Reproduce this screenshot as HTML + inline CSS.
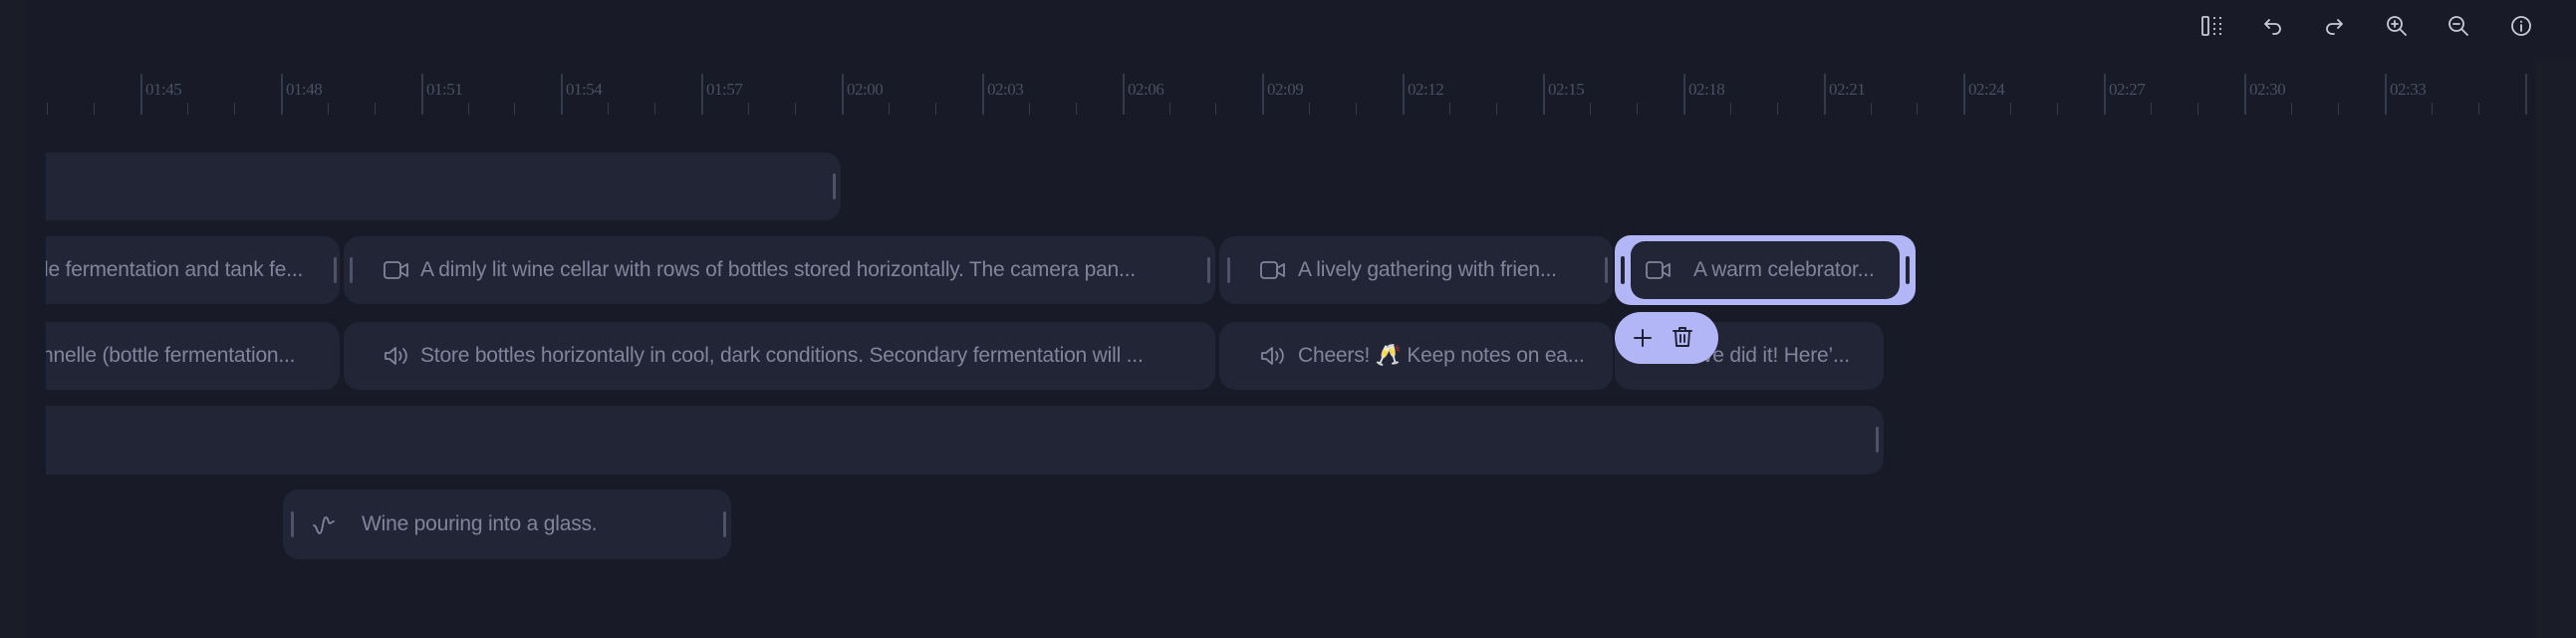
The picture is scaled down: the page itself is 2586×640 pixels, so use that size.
<!DOCTYPE html>
<html><head><meta charset="utf-8"><style>
*{margin:0;padding:0;box-sizing:border-box}
body{width:2586px;height:640px;background:#181a27;overflow:hidden;position:relative;font-family:"Liberation Sans","DejaVu Sans",sans-serif}
.lp{position:absolute;left:0;top:0;width:27px;height:640px;background:#1a1c28}
.rp{position:absolute;left:2545px;top:60px;width:41px;height:580px;background:#1a1c28}
.view{position:absolute;left:46px;top:0;width:2500px;height:640px;overflow:hidden}
.M{position:absolute;top:74px;width:2px;height:41px;background:#363a4a}
.m{position:absolute;top:103px;width:1px;height:12px;background:#363a4a}
.L{position:absolute;top:80px;font-family:"Liberation Serif",serif;font-size:17px;color:#4b4f60;letter-spacing:-0.5px}
.c{position:absolute;background:#222536;border-radius:16px;overflow:hidden}
.t{position:absolute;top:0;line-height:68px;font-size:21px;color:#80859a;white-space:nowrap;letter-spacing:-0.2px}
.h{position:absolute;top:21px;width:3px;height:26px;background:#4e5366;border-radius:2px}
.ic{position:absolute;top:22px}
.tb{position:absolute;top:13px}
</style></head><body>
<div class="lp"></div><div class="rp"></div>
<svg class="tb" style="left:2208px" width="26" height="26" viewBox="0 0 26 26" fill="none" stroke="#c8cbd6" stroke-width="1.8"><rect x="3" y="4" width="6" height="18" rx="1"/><path d="M15 4v2M15 10v2M15 15v2M15 20v2M21 4v2M21 10v2M21 15v2M21 20v2"/></svg>
<svg class="tb" style="left:2269px" width="26" height="26" viewBox="0 0 26 26" fill="none" stroke="#c8cbd6" stroke-width="1.8" stroke-linecap="round" stroke-linejoin="round"><path d="M9 7l-4 4 4 4M5 11h10a5 5 0 010 10h-2"/></svg>
<svg class="tb" style="left:2330px" width="26" height="26" viewBox="0 0 26 26" fill="none" stroke="#c8cbd6" stroke-width="1.8" stroke-linecap="round" stroke-linejoin="round"><path d="M17 7l4 4-4 4M21 11H11a5 5 0 000 10h2"/></svg>
<svg class="tb" style="left:2393px" width="26" height="26" viewBox="0 0 26 26" fill="none" stroke="#c8cbd6" stroke-width="1.8" stroke-linecap="round"><circle cx="11" cy="11" r="7"/><path d="M16 16l6 6M11 8v6M8 11h6"/></svg>
<svg class="tb" style="left:2455px" width="26" height="26" viewBox="0 0 26 26" fill="none" stroke="#c8cbd6" stroke-width="1.8" stroke-linecap="round"><circle cx="11" cy="11" r="7"/><path d="M16 16l6 6M8 11h6"/></svg>
<svg class="tb" style="left:2518px" width="26" height="26" viewBox="0 0 26 26" fill="none" stroke="#c8cbd6" stroke-width="1.8" stroke-linecap="round"><circle cx="13" cy="13" r="9"/><path d="M13 12v6M13 8.5v.5"/></svg>
<div class="view">
<div class="L" style="left:-38px">01:42</div>
<div class="m" style="left:1px"></div><div class="m" style="left:48px"></div>
<div class="M" style="left:95px"></div><div class="L" style="left:100px">01:45</div><div class="m" style="left:142px"></div><div class="m" style="left:189px"></div>
<div class="M" style="left:236px"></div><div class="L" style="left:241px">01:48</div><div class="m" style="left:283px"></div><div class="m" style="left:330px"></div>
<div class="M" style="left:377px"></div><div class="L" style="left:382px">01:51</div><div class="m" style="left:424px"></div><div class="m" style="left:470px"></div>
<div class="M" style="left:517px"></div><div class="L" style="left:522px">01:54</div><div class="m" style="left:564px"></div><div class="m" style="left:611px"></div>
<div class="M" style="left:658px"></div><div class="L" style="left:663px">01:57</div><div class="m" style="left:705px"></div><div class="m" style="left:752px"></div>
<div class="M" style="left:799px"></div><div class="L" style="left:804px">02:00</div><div class="m" style="left:846px"></div><div class="m" style="left:893px"></div>
<div class="M" style="left:940px"></div><div class="L" style="left:945px">02:03</div><div class="m" style="left:987px"></div><div class="m" style="left:1034px"></div>
<div class="M" style="left:1081px"></div><div class="L" style="left:1086px">02:06</div><div class="m" style="left:1128px"></div><div class="m" style="left:1174px"></div>
<div class="M" style="left:1221px"></div><div class="L" style="left:1226px">02:09</div><div class="m" style="left:1268px"></div><div class="m" style="left:1315px"></div>
<div class="M" style="left:1362px"></div><div class="L" style="left:1367px">02:12</div><div class="m" style="left:1409px"></div><div class="m" style="left:1456px"></div>
<div class="M" style="left:1503px"></div><div class="L" style="left:1508px">02:15</div><div class="m" style="left:1550px"></div><div class="m" style="left:1597px"></div>
<div class="M" style="left:1644px"></div><div class="L" style="left:1649px">02:18</div><div class="m" style="left:1691px"></div><div class="m" style="left:1738px"></div>
<div class="M" style="left:1785px"></div><div class="L" style="left:1790px">02:21</div><div class="m" style="left:1832px"></div><div class="m" style="left:1878px"></div>
<div class="M" style="left:1925px"></div><div class="L" style="left:1930px">02:24</div><div class="m" style="left:1972px"></div><div class="m" style="left:2019px"></div>
<div class="M" style="left:2066px"></div><div class="L" style="left:2071px">02:27</div><div class="m" style="left:2113px"></div><div class="m" style="left:2160px"></div>
<div class="M" style="left:2207px"></div><div class="L" style="left:2212px">02:30</div><div class="m" style="left:2254px"></div><div class="m" style="left:2301px"></div>
<div class="M" style="left:2348px"></div><div class="L" style="left:2353px">02:33</div><div class="m" style="left:2395px"></div><div class="m" style="left:2442px"></div>
<div class="M" style="left:2489px"></div>

<div class="c" style="left:-20px;top:153px;width:818px;height:68px"><div class="h" style="left:810px"></div></div>
<div class="c" style="left:-20px;top:237px;width:315px;height:68px"><div class="t" style="left:18px">le fermentation and tank fe...</div><div class="h" style="left:309px"></div></div>
<div class="c" style="left:299px;top:237px;width:875px;height:68px">
<div class="h" style="left:6px"></div>
<svg class="ic" style="left:39px" width="28" height="24" viewBox="0 0 28 24" fill="none" stroke="#80859a" stroke-width="1.8" stroke-linejoin="round"><rect x="2" y="4" width="16" height="16" rx="3"/><path d="M18 10l7-4v12l-7-4z"/></svg>
<div class="t" style="left:77px">A dimly lit wine cellar with rows of bottles stored horizontally. The camera pan...</div>
<div class="h" style="left:867px"></div></div>
<div class="c" style="left:1178px;top:237px;width:395px;height:68px">
<div class="h" style="left:8px"></div>
<svg class="ic" style="left:40px" width="28" height="24" viewBox="0 0 28 24" fill="none" stroke="#80859a" stroke-width="1.8" stroke-linejoin="round"><rect x="2" y="4" width="16" height="16" rx="3"/><path d="M18 10l7-4v12l-7-4z"/></svg>
<div class="t" style="left:79px">A lively gathering with frien...</div>
<div class="h" style="left:387px"></div></div>
<div class="c" style="left:-20px;top:323px;width:315px;height:68px"><div class="t" style="left:16px">nnelle (bottle fermentation...</div></div>
<div class="c" style="left:299px;top:323px;width:875px;height:68px">
<svg class="ic" style="left:39px" width="28" height="24" viewBox="0 0 28 24" fill="none" stroke="#80859a" stroke-width="1.8" stroke-linejoin="round" stroke-linecap="round"><path d="M3 9h4l6-5v16l-6-5H3z"/><path d="M17 8a6 6 0 010 8M21 5a10 10 0 010 14"/></svg>
<div class="t" style="left:77px">Store bottles horizontally in cool, dark conditions. Secondary fermentation will ...</div></div>
<div class="c" style="left:1178px;top:323px;width:395px;height:68px">
<svg class="ic" style="left:40px" width="28" height="24" viewBox="0 0 28 24" fill="none" stroke="#80859a" stroke-width="1.8" stroke-linejoin="round" stroke-linecap="round"><path d="M3 9h4l6-5v16l-6-5H3z"/><path d="M17 8a6 6 0 010 8M21 5a10 10 0 010 14"/></svg>
<div class="t" style="left:79px">Cheers! 🥂 Keep notes on ea...</div></div>
<div class="c" style="left:1575px;top:323px;width:270px;height:68px">
<div class="t" style="left:79px">We did it! Here’...</div></div>
<div class="c" style="left:-20px;top:407px;width:1865px;height:69px"><div class="h" style="left:1857px"></div></div>
<div class="c" style="left:238px;top:491px;width:450px;height:70px">
<div class="h" style="left:8px;top:22px"></div>
<svg class="ic" style="left:28px;top:22px" width="30" height="26" viewBox="0 0 30 26" fill="none" stroke="#80859a" stroke-width="1.8" stroke-linecap="round" stroke-linejoin="round"><path d="M3 14c3 0 3 8 6 8s3-16 6-16 2 6 4 6 2-2 4-2"/></svg>
<div class="t" style="left:79px;line-height:70px">Wine pouring into a glass.</div>
<div class="h" style="left:442px;top:22px"></div></div>
<div style="position:absolute;left:1575px;top:236px;width:302px;height:70px;background:#b2b6f7;border-radius:16px">
<div style="position:absolute;left:16px;top:6px;width:270px;height:58px;background:#222536;border-radius:14px"></div>
<div style="position:absolute;left:6px;top:21px;width:4px;height:28px;background:#222536;border-radius:2px"></div>
<div style="position:absolute;left:292px;top:21px;width:4px;height:28px;background:#222536;border-radius:2px"></div>
<svg style="position:absolute;left:30px;top:23px" width="28" height="24" viewBox="0 0 28 24" fill="none" stroke="#80859a" stroke-width="1.8" stroke-linejoin="round"><rect x="2" y="4" width="16" height="16" rx="3"/><path d="M18 10l7-4v12l-7-4z"/></svg>
<div class="t" style="left:79px;line-height:70px">A warm celebrator...</div>
</div>
<div style="position:absolute;left:1575px;top:313px;width:104px;height:52px;background:#b2b6f7;border-radius:26px">
<svg style="position:absolute;left:16px;top:14px" width="24" height="24" viewBox="0 0 24 24" fill="none" stroke="#1f2233" stroke-width="2" stroke-linecap="round"><path d="M12 4v16M4 12h16"/></svg>
<svg style="position:absolute;left:55px;top:12px" width="26" height="26" viewBox="0 0 26 26" fill="none" stroke="#1f2233" stroke-width="1.9" stroke-linecap="round" stroke-linejoin="round"><path d="M4 7h18M10 7V4h6v3M6 7l1 15h12l1-15M11 11v7M15 11v7"/></svg>
</div>
</div>
</body></html>
